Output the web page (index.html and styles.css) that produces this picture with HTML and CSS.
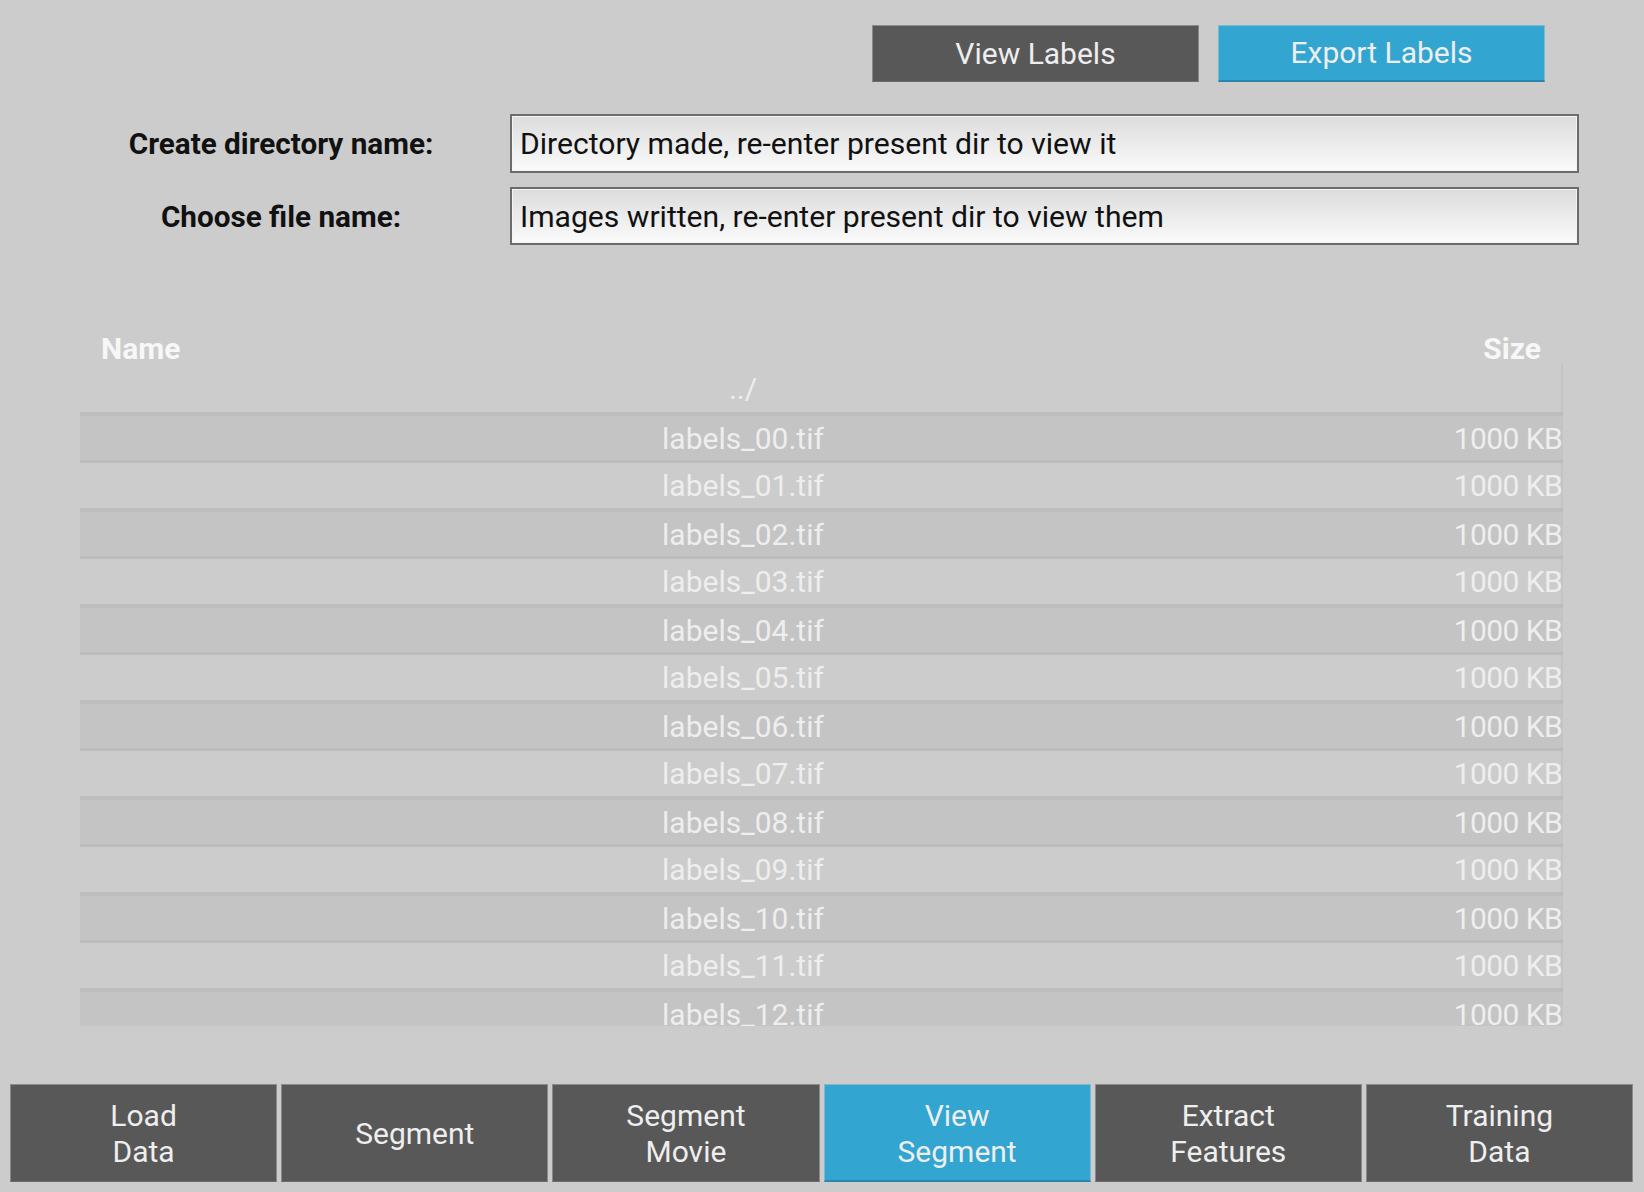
FILE: index.html
```html
<!DOCTYPE html>
<html>
<head>
<meta charset="utf-8">
<link rel="stylesheet" href="styles.css">
</head>
<body>
<div class="app">
  <div class="topbar">
    <div class="btn btn-dark top-btn">View Labels</div>
    <div class="btn btn-blue top-btn">Export Labels</div>
  </div>
  <div class="form">
    <div class="label">Create directory name:</div>
    <div class="input">Directory made, re-enter present dir to view it</div>
    <div class="label">Choose file name:</div>
    <div class="input">Images written, re-enter present dir to view them</div>
  </div>
  <div class="table-head">
    <span>Name</span>
    <span>Size</span>
  </div>
  <div class="list">
    <div class="row parent"><span class="name">../</span><span class="size"></span></div>
    <div class="row dark"><span class="name">labels_00.tif</span><span class="size">1000 KB</span></div>
    <div class="row"><span class="name">labels_01.tif</span><span class="size">1000 KB</span></div>
    <div class="row dark"><span class="name">labels_02.tif</span><span class="size">1000 KB</span></div>
    <div class="row"><span class="name">labels_03.tif</span><span class="size">1000 KB</span></div>
    <div class="row dark"><span class="name">labels_04.tif</span><span class="size">1000 KB</span></div>
    <div class="row"><span class="name">labels_05.tif</span><span class="size">1000 KB</span></div>
    <div class="row dark"><span class="name">labels_06.tif</span><span class="size">1000 KB</span></div>
    <div class="row"><span class="name">labels_07.tif</span><span class="size">1000 KB</span></div>
    <div class="row dark"><span class="name">labels_08.tif</span><span class="size">1000 KB</span></div>
    <div class="row"><span class="name">labels_09.tif</span><span class="size">1000 KB</span></div>
    <div class="row dark"><span class="name">labels_10.tif</span><span class="size">1000 KB</span></div>
    <div class="row"><span class="name">labels_11.tif</span><span class="size">1000 KB</span></div>
    <div class="row dark"><span class="name">labels_12.tif</span><span class="size">1000 KB</span></div>
  </div>
  <div class="tabs">
    <div class="btn btn-dark tab">Load<br>Data</div>
    <div class="btn btn-dark tab">Segment</div>
    <div class="btn btn-dark tab">Segment<br>Movie</div>
    <div class="btn btn-blue tab">View<br>Segment</div>
    <div class="btn btn-dark tab">Extract<br>Features</div>
    <div class="btn btn-dark tab">Training<br>Data</div>
  </div>
</div>
</body>
</html>
```
FILE: styles.css
```css
html, body {
  margin: 0;
  padding: 0;
  background: #cccccc;
}
body {
  font-family: Roboto, "Liberation Sans", sans-serif;
  width: 1644px;
  height: 1192px;
  overflow: hidden;
}
.app {
  display: flex;
  flex-direction: column;
  height: 1192px;
}
.btn {
  display: flex;
  align-items: center;
  justify-content: center;
  text-align: center;
  color: #eeeeee;
  font-size: 30px;
  line-height: 36px;
  box-sizing: border-box;
}
.btn-dark {
  background: #585858;
  border: 1px solid #8a8a8a;
  border-bottom-color: #6a6a6a;
}
.btn-blue {
  background: #33a5d1;
  border: 1px solid #7fb9cf;
  border-bottom: 2px solid #2a86aa;
}
.topbar {
  display: flex;
  justify-content: flex-end;
  gap: 19px;
  padding: 25px 99px 0 0;
}
.top-btn {
  width: 327px;
  height: 57px;
}
.form {
  display: grid;
  grid-template-columns: 458px 1069px;
  row-gap: 14px;
  padding: 32px 0 0 52px;
}
.label {
  font-weight: bold;
  font-size: 29.7px;
  color: #111111;
  display: flex;
  align-items: center;
  justify-content: center;
}
.input {
  height: 59px;
  box-sizing: border-box;
  border: 2px solid #6c6c6c;
  box-shadow: inset 0 0 0 1px #f4f4f4;
  background: linear-gradient(to bottom, #dcdcdc 0%, #f0f0f0 65%, #fbfbfb 100%);
  font-size: 30.1px;
  color: #111111;
  display: flex;
  align-items: center;
  padding-left: 8px;
}
.form .input:nth-of-type(4) {
  height: 58px;
}
.table-head {
  display: flex;
  justify-content: space-between;
  margin: 87px 0 0 80px;
  width: 1483px;
  padding: 0 22px 0 21px;
  box-sizing: border-box;
  height: 32px;
  align-items: center;
  color: #f7f7f7;
  font-weight: bold;
  font-size: 30px;
}
.list {
  margin-left: 80px;
  width: 1483px;
  height: 662px;
  overflow: hidden;
  box-shadow: inset -2px 0 0 #c4c4c4;
}
.row {
  display: flex;
  align-items: center;
  height: 45px;
  box-sizing: border-box;
  color: #eeeeee;
  font-size: 30px;
}
.row.parent {
  height: 48px;
}
.row.dark {
  height: 51px;
  background: #c4c4c4;
  border-top: 4px solid #bdbdbd;
  border-bottom: 3px solid #bdbdbd;
}
.name {
  width: 1326px;
  text-align: center;
}
.size {
  flex: 1;
  text-align: right;
  padding-right: 1px;
  letter-spacing: -0.6px;
}
.tabs {
  display: flex;
  gap: 4px;
  padding: 58px 11px 0 10px;
}
.tab {
  flex: 1;
  height: 98px;
  padding-top: 2px;
}
```
